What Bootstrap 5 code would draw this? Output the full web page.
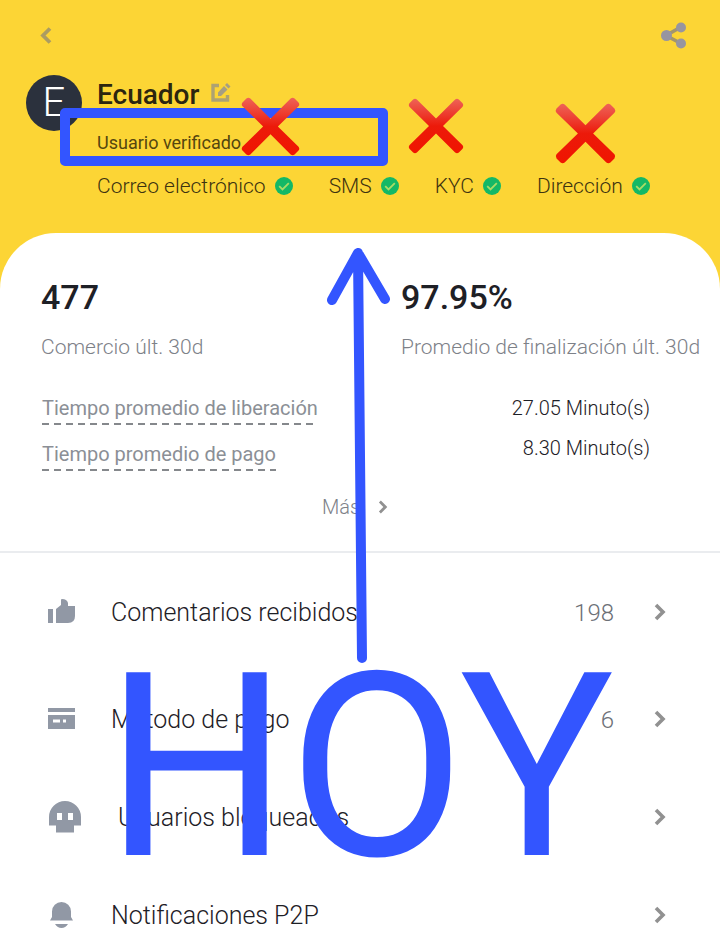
<!DOCTYPE html>
<html lang="es">
<head>
<meta charset="utf-8">
<meta name="viewport" content="width=device-width, initial-scale=1">
<title>Perfil P2P</title>
<link href="https://cdn.jsdelivr.net/npm/bootstrap@5.3.0/dist/css/bootstrap.min.css" rel="stylesheet">
<style>
  body { font-family: Roboto, "Liberation Sans", sans-serif; font-weight: 300; background: #fff; color: #1e2026; overflow-x: hidden; }
  svg { display: block; flex: none; }
  .profile-head { background: #fcd535; padding-bottom: 91px; color: #3d3310; }
  .top-bar { padding: 20px 32px 0 38px; }
  .plain-btn { border: 0; background: none; padding: 0; color: #9b9b95; }
  .identity { padding: 24px 26px 0; gap: 15px; }
  .avatar { width: 56px; height: 56px; border-radius: 50%; background: #2b313d; color: #fff; font-size: 40px; font-weight: 300; line-height: 56px; flex: none; text-align: center; }
  .user-name { font-size: 28px; font-weight: 500; line-height: 32px; color: #2c260f; margin: 4px 0 0; }
  .name-row { gap: 10px; }
  .status-text { font-size: 18px; font-weight: 400; line-height: 24px; margin: 20px 0 0; color: #54460f; }
  .checks { font-size: 21px; line-height: 24px; padding-top: 19px; gap: 36px; }
  .check-item { gap: 9px; }
  .sheet { background: #fff; border-radius: 56px 56px 0 0; margin-top: -56px; border-bottom: 2px solid #eaecef; padding-bottom: 30px; }
  .stat { padding: 44px 0 0 41px; white-space: nowrap; }
  .stat-value { font-size: 34px; font-weight: 500; line-height: 40px; color: #1e2026; }
  .stat-label { font-size: 21px; line-height: 28px; margin-top: 16px; }
  .soft { color: #7d8188; }
  .times { font-size: 20px; line-height: 28px; padding: 33px 70px 0 42px; }
  .time-label { color: #8b8f96; font-weight: 400; padding-bottom: 3px; margin-bottom: 15px; line-height: 28px;
    background: repeating-linear-gradient(90deg, #85888c 0 7px, transparent 7px 12px) bottom / 100% 2px no-repeat; }
  .time-value { margin-bottom: 12px; }
  .more-link { font-size: 20px; line-height: 28px; gap: 18px; color: #7d8188; padding: 7px 10px 0 0; }
  .options { padding: 44px 54px 8px 48px; gap: 66px; }
  .option { font-size: 25px; line-height: 32px; gap: 36px; color: #1e2026; height: 32px; }
  .option:first-child { margin-bottom: 9px; }
  .option svg { margin-bottom: 3px; }
  .option .count { color: #6d7077; font-size: 24px; }
  .option-end { gap: 40px; }
  .ink-layer { left: 0; top: 0; width: 720px; height: 939px; pointer-events: none; }
  .big-word { left: 105px; top: 618px; font-size: 257px; font-weight: 400; line-height: 300px; color: #3355ff; pointer-events: none; }
</style>
</head>
<body>
<svg width="0" height="0" class="position-absolute" aria-hidden="true">
  <defs>
    <symbol id="tick" viewBox="0 0 18 18"><circle cx="9" cy="9" r="9" fill="#14b866"/><path d="M4.200 9.200l3.300 3.300 6.300-6.400" fill="none" stroke="#a9dc66" stroke-width="1.800"/></symbol>
    <symbol id="chev" viewBox="0 0 12 18"><path d="M2 2l7 7-7 7" fill="none" stroke="#919191" stroke-width="3.600"/></symbol>
    <linearGradient id="red" x1="0" y1="0" x2="0" y2="1"><stop offset="0" stop-color="#ee6357"/><stop offset=".3" stop-color="#ed382b"/><stop offset=".5" stop-color="#ec1a0a"/><stop offset="1" stop-color="#f01500"/></linearGradient>
    <symbol id="cross" viewBox="0 0 60 60"><path fill="url(#red)" d="M5.500 1.500Q7.500 0 9.500 1.500L30 22 50.500 1.500Q52.500 0 54.500 1.500L58.500 5.500Q60 7.500 58.500 9.500L37.500 30 58.500 50.500Q60 52.500 58.500 54.500L54.500 58.500Q52.500 60 50.500 58.500L30 38 9.500 58.500Q7.500 60 5.500 58.500L1.500 54.500Q0 52.500 1.500 50.500L22.500 30 1.500 9.500Q0 7.500 1.500 5.500Z"/></symbol>
  </defs>
</svg>
<div class="position-relative overflow-hidden">
  <header class="profile-head">
    <div class="top-bar d-flex justify-content-between align-items-center">
      <button class="plain-btn" type="button" aria-label="Volver">
        <svg width="16" height="18" viewBox="0 0 16 18"><path d="M12 1.500L5 8.500l7 7" fill="none" stroke="#ab9c62" stroke-width="3.800"/></svg>
      </button>
      <button class="plain-btn" type="button" aria-label="Compartir">
        <svg width="28" height="31" viewBox="0 0 28 31"><path d="M21 7L6 15.500 21 23.500" fill="none" stroke="#a3966c" stroke-width="3.600"/><g fill="#9795a0"><circle cx="21" cy="7.500" r="5"/><circle cx="6.500" cy="15.500" r="5.500"/><circle cx="21" cy="23.500" r="5"/></g></svg>
      </button>
    </div>
    <div class="identity d-flex">
      <div class="avatar">E</div>
      <div class="flex-grow-1">
        <div class="name-row d-flex align-items-center">
          <h1 class="user-name">Ecuador</h1>
          <button class="plain-btn" type="button" aria-label="Editar nombre">
            <svg width="22" height="20" viewBox="0 0 22 20"><path d="M10 2.500H4v14.500h14.500V12" fill="none" stroke="#ada272" stroke-width="3.400"/><path d="M9 9.500L15 3l3.500 3.500-6.500 6.500H9zM16 2L18 0 21.500 3.500 19.500 5.500z" fill="#a69e82"/></svg>
          </button>
        </div>
        <p class="status-text">Usuario verificado</p>
        <div class="checks d-flex">
          <span class="check-item d-flex align-items-center">Correo electrónico <svg width="18" height="18"><use href="#tick"/></svg></span>
          <span class="check-item d-flex align-items-center">SMS <svg width="18" height="18"><use href="#tick"/></svg></span>
          <span class="check-item d-flex align-items-center">KYC <svg width="18" height="18"><use href="#tick"/></svg></span>
          <span class="check-item d-flex align-items-center">Dirección <svg width="18" height="18"><use href="#tick"/></svg></span>
        </div>
      </div>
    </div>
  </header>

  <section class="sheet">
    <div class="row g-0">
      <div class="col-6 stat"><div class="stat-value">477</div><div class="stat-label soft">Comercio últ. 30d</div></div>
      <div class="col-6 stat"><div class="stat-value">97.95%</div><div class="stat-label soft">Promedio de finalización últ. 30d</div></div>
    </div>
    <div class="times d-flex justify-content-between">
      <div class="d-flex flex-column align-items-start">
        <span class="time-label">Tiempo promedio de liberación</span>
        <span class="time-label">Tiempo promedio de pago</span>
      </div>
      <div class="text-end">
        <div class="time-value">27.05 Minuto(s)</div>
        <div class="time-value">8.30 Minuto(s)</div>
      </div>
    </div>
    <a href="#" class="more-link d-flex justify-content-center align-items-center text-decoration-none">Más <svg width="10" height="14" viewBox="0 0 12 18"><use href="#chev"/></svg></a>
  </section>

  <nav class="options d-flex flex-column">
    <a href="#" class="option d-flex align-items-center text-decoration-none">
      <svg width="27" height="26" viewBox="0 0 27 26"><path fill="#9198a5" d="M0 10h5v14H0zM8 10l5-4V1q0-1 1-1 5 0 6 4v3h7v10q0 7-7 7H8z"/></svg>
      <span class="flex-grow-1">Comentarios recibidos</span>
      <span class="option-end d-flex align-items-center"><span class="count">198</span><svg width="12" height="18"><use href="#chev"/></svg></span>
    </a>
    <a href="#" class="option d-flex align-items-center text-decoration-none">
      <svg width="27" height="22" viewBox="0 0 27 22"><path fill="#9198a5" fill-rule="evenodd" d="M0 0h27v4H0zM0 7h27v14H0zM5 11.500v3h7v-3zM15 11.500v3h3v-3z"/></svg>
      <span class="flex-grow-1">Método de pago</span>
      <span class="option-end d-flex align-items-center"><span class="count">6</span><svg width="12" height="18"><use href="#chev"/></svg></span>
    </a>
    <a href="#" class="option d-flex align-items-center text-decoration-none">
      <svg width="34" height="34" viewBox="0 0 34 34"><path fill="#9198a5" fill-rule="evenodd" d="M1 25.500V17a16 16 0 0 1 32 0v8.500h-7v7H8v-7zM9 13v7h5v-7zM20 13v7h5v-7z"/></svg>
      <span class="flex-grow-1">Usuarios bloqueados</span>
      <svg width="12" height="18"><use href="#chev"/></svg>
    </a>
    <a href="#" class="option d-flex align-items-center text-decoration-none">
      <svg width="27" height="28" viewBox="0 0 27 28"><path fill="#9198a5" d="M2 19.500L4 16V10.500a9.500 9.500 0 0 1 19 0V16l2 3.500zM7 23h13q-2.500 4-6.500 4T7 23z"/></svg>
      <span class="flex-grow-1">Notificaciones P2P</span>
      <svg width="12" height="18"><use href="#chev"/></svg>
    </a>
  </nav>

  <svg class="ink-layer position-absolute" viewBox="0 0 720 939" aria-hidden="true">
    <g fill="none" stroke="#3355ff" stroke-width="10" stroke-linejoin="round" stroke-linecap="round">
      <rect x="65" y="113" width="318" height="48"/>
      <path d="M362 658L358 253M332 300L358 253 385 299"/>
    </g>
    <use href="#cross" x="241" y="97" width="59" height="59"/>
    <use href="#cross" x="408" y="98" width="56" height="56"/>
    <use href="#cross" x="555" y="103" width="61" height="61"/>
  </svg>
  <div class="big-word position-absolute">HOY</div>
</div>
<script src="https://cdn.jsdelivr.net/npm/bootstrap@5.3.0/dist/js/bootstrap.bundle.min.js"></script>
</body>
</html>
